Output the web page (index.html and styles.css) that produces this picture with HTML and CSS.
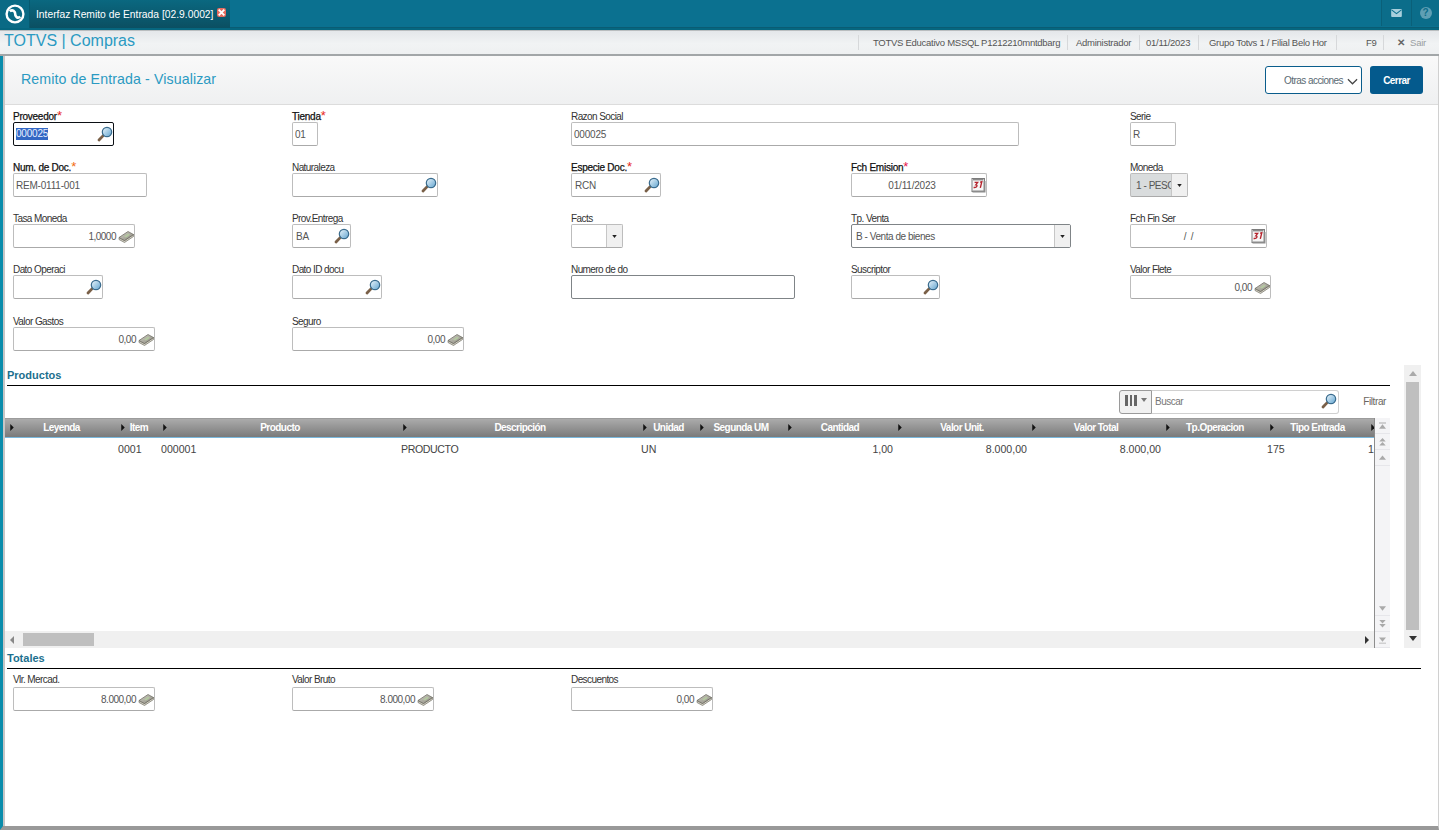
FILE: index.html
```html
<!DOCTYPE html>
<html lang="es">
<head>
<meta charset="utf-8">
<title>Remito de Entrada - Visualizar</title>
<link rel="stylesheet" href="styles.css">
</head>
<body>
<svg class="defs" width="0" height="0" aria-hidden="true">
  <defs>
    <linearGradient id="lens" x1="0" y1="0" x2="1" y2="1"><stop offset="0" stop-color="#eef7fc"/><stop offset="1" stop-color="#5fa3cf"/></linearGradient>
    <linearGradient id="cash" x1="0" y1="0" x2="1" y2="1"><stop offset="0" stop-color="#d2d0c6"/><stop offset="1" stop-color="#8a887e"/></linearGradient>
    <symbol id="i-search" viewBox="0 0 16 16">
      <path d="M2 14 L6.2 9.6" stroke="#7a6048" stroke-width="2.8" stroke-linecap="round"/>
      <circle cx="10" cy="6" r="4.7" fill="url(#lens)" stroke="#3a6c8e" stroke-width="1.2"/>
    </symbol>
    <symbol id="i-cal" viewBox="0 0 16 16">
      <rect x="2" y="1.5" width="12.5" height="13" fill="#f6f6f6" stroke="#7c7c7c"/>
      <path d="M2.5 14.5 L14.5 14.5 L14.5 4" fill="none" stroke="#8c8c8c" stroke-width="2"/>
      <rect x="3" y="2" width="10.5" height="1.4" fill="#8a8a8a"/>
      <path d="M4.6 5.4h3l-1.7 2.3c1.8 0 1.5 3.3-2.3 2.8M10.2 5.2l1.6-.4-1.5 6" fill="none" stroke="#b5252e" stroke-width="1.4"/>
    </symbol>
    <symbol id="i-money" viewBox="0 0 16 16">
      <path d="M1 9.5 L6.5 12.5 L15.5 6.5 L15.5 8.5 L6.5 14.5 L1 11.5 Z" fill="#cfccc0" stroke="#77756a" stroke-width=".7"/>
      <path d="M1 9.5 L10 3.5 L15.5 6.5 L6.5 12.5 Z" fill="url(#cash)" stroke="#66645a" stroke-width=".7"/>
      <path d="M6 8.5 L10 5.8 L12 6.8 L8 9.5 Z" fill="#b4c9a0"/>
    </symbol>
    <symbol id="i-caret" viewBox="0 0 6 4"><path d="M0 0H6L3 4Z" fill="#222"/></symbol>
    <symbol id="i-th" viewBox="0 0 4 8"><path d="M0 0L4 4L0 8Z" fill="#111"/></symbol>
  </defs>
</svg>

<header class="topbar">
  <div class="logo-tab">
    <svg class="logo" viewBox="0 0 20 20">
      <circle cx="10" cy="10" r="8.4" fill="none" stroke="#fff" stroke-width="2.4"/>
      <path d="M4.8 7.4 C7.6 4.8 10.4 7.8 10.2 10 C10 12.2 12.6 15.2 15.2 12.6" fill="none" stroke="#fff" stroke-width="2.6"/>
    </svg>
  </div>
  <div class="tab">
    <span>Interfaz Remito de Entrada [02.9.0002]</span>
    <span class="tab-close"><svg viewBox="0 0 8 8"><path d="M1.5 1.5L6.5 6.5M6.5 1.5L1.5 6.5" stroke="#fff" stroke-width="1.7"/></svg></span>
  </div>
  <div class="top-actions">
    <div class="top-btn btn-mail"><svg class="mail" viewBox="0 0 12 9"><rect width="12" height="9" rx="1" fill="#a9cfdc"/><path d="M.5 1L6 5.2L11.5 1" fill="none" stroke="#0b7190" stroke-width="1.2"/></svg></div>
    <div class="top-btn btn-help"><span class="help">?</span></div>
  </div>
</header>

<div class="subbar">
  <div class="brand">TOTVS | Compras</div>
  <div class="status">
    <span class="st st-env">TOTVS Educativo MSSQL P1212210mntdbarg</span>
    <span class="st st-user">Administrador</span>
    <span class="st st-date">01/11/2023</span>
    <span class="st st-branch">Grupo Totvs 1 / Filial Belo Hor</span>
    <span class="st st-f9">F9</span>
    <span class="st st-exit"><b>✕</b> Sair</span>
  </div>
</div>

<main class="page">
  <section class="page-head">
    <h1>Remito de Entrada - Visualizar</h1>
    <div class="head-actions">
      <button class="btn-more">Otras acciones<svg viewBox="0 0 12 7"><path d="M1 1L6 6L11 1" fill="none" stroke="#444" stroke-width="1.3"/></svg></button>
      <button class="btn-close">Cerrar</button>
    </div>
  </section>

  <section class="form">
    <div class="field"><label class="req">Proveedor<i>*</i></label><div class="box w101 focus"><span class="sel">000025</span><svg class="ic"><use href="#i-search"/></svg></div></div>
    <div class="field"><label class="req">Tienda<i>*</i></label><div class="box w26"><span>01</span></div></div>
    <div class="field"><label>Razon Social</label><div class="box w448"><span>000025</span></div></div>
    <div class="field"></div>
    <div class="field"><label>Serie</label><div class="box w46"><span>R</span></div></div>

    <div class="field"><label class="req">Num. de Doc.<i class="or">*</i></label><div class="box w134"><span>REM-0111-001</span></div></div>
    <div class="field"><label>Naturaleza</label><div class="box w146"><span></span><svg class="ic"><use href="#i-search"/></svg></div></div>
    <div class="field"><label class="req">Especie Doc.<i>*</i></label><div class="box w90"><span class="in">RCN</span><svg class="ic"><use href="#i-search"/></svg></div></div>
    <div class="field"><label class="req">Fch Emision<i class="pk">*</i></label><div class="box w136"><span class="ctr">01/11/2023</span><svg class="ic"><use href="#i-cal"/></svg></div></div>
    <div class="field"><label>Moneda</label><div class="box combo w58 off"><span>1 - PESC</span><em><svg><use href="#i-caret"/></svg></em></div></div>

    <div class="field"><label>Tasa Moneda</label><div class="box w122"><span class="num">1,0000</span><svg class="ic"><use href="#i-money"/></svg></div></div>
    <div class="field"><label>Prov.Entrega</label><div class="box w59"><span class="in">BA</span><svg class="ic"><use href="#i-search"/></svg></div></div>
    <div class="field"><label>Facts</label><div class="box combo w52"><span></span><em><svg><use href="#i-caret"/></svg></em></div></div>
    <div class="field"><label>Tp. Venta</label><div class="box combo w220 dark"><span class="in">B - Venta de bienes</span><em><svg><use href="#i-caret"/></svg></em></div></div>
    <div class="field"><label>Fch Fin Ser</label><div class="box w137"><span class="ctr blank">/ /</span><svg class="ic"><use href="#i-cal"/></svg></div></div>

    <div class="field"><label>Dato Operaci</label><div class="box w90"><span></span><svg class="ic"><use href="#i-search"/></svg></div></div>
    <div class="field"><label>Dato ID docu</label><div class="box w90"><span></span><svg class="ic"><use href="#i-search"/></svg></div></div>
    <div class="field"><label>Numero de do</label><div class="box w224 dark"><span></span></div></div>
    <div class="field"><label>Suscriptor</label><div class="box w89"><span></span><svg class="ic"><use href="#i-search"/></svg></div></div>
    <div class="field"><label>Valor Flete</label><div class="box w141"><span class="num">0,00</span><svg class="ic"><use href="#i-money"/></svg></div></div>

    <div class="field lower"><label>Valor Gastos</label><div class="box w142"><span class="num">0,00</span><svg class="ic"><use href="#i-money"/></svg></div></div>
    <div class="field lower"><label>Seguro</label><div class="box w172"><span class="num">0,00</span><svg class="ic"><use href="#i-money"/></svg></div></div>
  </section>

  <div class="work">
    <div class="work-main">
      <h2 class="sect sect-prod">Productos</h2>
      <div class="grid-tools">
        <div class="searchbar">
          <div class="cols"><span class="bars"><b></b><b></b><b></b></span><svg viewBox="0 0 6 4"><path d="M0 0H6L3 4Z" fill="#777"/></svg></div>
          <div class="search-in"><span>Buscar</span><svg class="ic"><use href="#i-search"/></svg></div>
        </div>
        <a class="filter">Filtrar</a>
      </div>

      <div class="browse">
        <div class="browse-main">
          <div class="tbl">
            <div class="row thead">
              <div class="c c1"><svg><use href="#i-th"/></svg><span>Leyenda</span></div>
              <div class="c c2"><svg><use href="#i-th"/></svg><span>Item</span></div>
              <div class="c c3"><svg><use href="#i-th"/></svg><span>Producto</span></div>
              <div class="c c4"><svg><use href="#i-th"/></svg><span>Descripción</span></div>
              <div class="c c5"><svg><use href="#i-th"/></svg><span>Unidad</span></div>
              <div class="c c6"><svg><use href="#i-th"/></svg><span>Segunda UM</span></div>
              <div class="c c7"><svg><use href="#i-th"/></svg><span>Cantidad</span></div>
              <div class="c c8"><svg><use href="#i-th"/></svg><span>Valor Unit.</span></div>
              <div class="c c9"><svg><use href="#i-th"/></svg><span>Valor Total</span></div>
              <div class="c c10"><svg><use href="#i-th"/></svg><span>Tp.Operacion</span></div>
              <div class="c c11"><svg><use href="#i-th"/></svg><span>Tipo Entrada</span></div>
              <div class="c c12"><svg><use href="#i-th"/></svg></div>
            </div>
            <div class="row tbody">
              <div class="d c1"></div>
              <div class="d c2">0001</div>
              <div class="d c3">000001</div>
              <div class="d c4">PRODUCTO</div>
              <div class="d c5">UN</div>
              <div class="d c6"></div>
              <div class="d c7 r">1,00</div>
              <div class="d c8 r">8.000,00</div>
              <div class="d c9 r">8.000,00</div>
              <div class="d c10"></div>
              <div class="d c11">175</div>
              <div class="d c12">1</div>
            </div>
          </div>
          <div class="hscroll">
            <svg class="ha" viewBox="0 0 4 8"><path d="M4 0L0 4L4 8Z" fill="#888"/></svg>
            <div class="hthumb"></div>
            <svg class="ha" viewBox="0 0 4 8"><path d="M0 0L4 4L0 8Z" fill="#333"/></svg>
          </div>
        </div>
        <div class="nav">
          <div class="nav-group">
            <span class="nb"><svg viewBox="0 0 8 8"><path d="M0 0H8V1H0ZM4 2L8 7H0Z" fill="#aaa"/></svg></span>
            <span class="nb"><svg viewBox="0 0 8 10"><path d="M4 0L8 4.5H0ZM4 5L8 9.5H0Z" fill="#aaa"/></svg></span>
            <span class="nb"><svg viewBox="0 0 8 8"><path d="M4 1L8 6H0Z" fill="#aaa"/></svg></span>
          </div>
          <div class="nav-group">
            <span class="nb"><svg viewBox="0 0 8 8"><path d="M0 2H8L4 7Z" fill="#aaa"/></svg></span>
            <span class="nb"><svg viewBox="0 0 8 10"><path d="M0 0H8L4 4.5ZM0 5H8L4 9.5Z" fill="#aaa"/></svg></span>
            <span class="nb"><svg viewBox="0 0 8 8"><path d="M0 1H8L4 6ZM0 7H8V8H0Z" fill="#aaa"/></svg></span>
          </div>
        </div>
      </div>
    </div>

    <div class="vscroll">
      <svg class="va" viewBox="0 0 8 5"><path d="M4 0L8 5H0Z" fill="#aaa"/></svg>
      <div class="vthumb"></div>
      <svg class="va va-down" viewBox="0 0 8 5"><path d="M0 0H8L4 5Z" fill="#333"/></svg>
    </div>
  </div>

  <h2 class="sect sect-tot">Totales</h2>

  <section class="form totals">
    <div class="field"><label>Vlr. Mercad.</label><div class="box w142"><span class="num">8.000,00</span><svg class="ic"><use href="#i-money"/></svg></div></div>
    <div class="field"><label>Valor Bruto</label><div class="box w142"><span class="num">8.000,00</span><svg class="ic"><use href="#i-money"/></svg></div></div>
    <div class="field"><label>Descuentos</label><div class="box w142"><span class="num">0,00</span><svg class="ic"><use href="#i-money"/></svg></div></div>
  </section>
</main>
</body>
</html>
```

FILE: styles.css
```css
* { box-sizing: border-box; }
html, body { margin: 0; height: 830px; overflow: hidden; }
body {
  width: 1439px;
  background: #fff;
  font-family: "Liberation Sans", Arial, sans-serif;
  font-size: 10px;
  color: #333;
  display: flex;
  flex-direction: column;
}
.defs { position: absolute; }

/* Top bar */
.topbar {
  height: 30px;
  flex: none;
  display: flex;
  background: #0b7190;
  border-bottom: 2px solid #06667f;
  box-shadow: inset 0 -1px 0 #0a5c73;
}
.logo-tab {
  width: 30px;
  height: 28px;
  display: flex;
  align-items: center;
  justify-content: center;
  background: #0a6a85;
  border-right: 1px solid #075a70;
}
.logo { width: 20px; height: 20px; }
.tab {
  width: 200px;
  height: 28px;
  display: flex;
  align-items: center;
  gap: 4px;
  padding: 0 0 0 6px;
  background: linear-gradient(#0a6880, #0b4f62);
  color: #fff;
  font-size: 10.3px;
  white-space: nowrap;
}
.tab-close {
  width: 9px;
  height: 9px;
  display: flex;
  background: #e56a5d;
  border-radius: 2px;
  margin-top: -3px;
}
.tab-close svg { width: 9px; height: 9px; }
.top-actions { margin-left: auto; display: flex; }
.top-btn {
  height: 26px;
  display: flex;
  align-items: center;
  justify-content: center;
  border-left: 1px solid #0a6079;
  background: #0b6d8a;
}
.btn-mail { width: 30px; }
.btn-help { width: 28px; }
.mail { width: 11px; height: 8px; }
.help {
  width: 12px;
  height: 12px;
  border-radius: 50%;
  background: #5f9fb4;
  color: #0b6d8a;
  font-weight: bold;
  font-size: 10px;
  line-height: 12px;
  text-align: center;
}

/* Module bar */
.subbar {
  height: 26px;
  flex: none;
  display: flex;
  align-items: center;
  justify-content: space-between;
  background: linear-gradient(#e4e7ea, #f1f3f4 55%, #eef0f1);
  border-top: 1px solid #b9bdbf;
  border-bottom: 2px solid #a2a6a8;
  padding-left: 4px;
}
.brand { font-size: 16px; color: #2b9ac2; white-space: nowrap; margin-top: -4px; }
.status { display: flex; align-items: center; height: 15px; margin-top: -1px; color: #555; font-size: 9.5px; letter-spacing: -.27px; white-space: nowrap; }
.st { border-left: 1px solid #d6d8da; height: 15px; line-height: 15px; display: block; }
.st-env { width: 209px; padding-left: 14px; }
.st-user { width: 72px; padding-left: 8px; }
.st-date { width: 59px; padding-left: 6px; }
.st-branch { width: 138px; padding-left: 10px; }
.st-f9 { width: 47px; padding-left: 29px; }
.st-exit { width: 56px; padding-left: 13px; color: #9a9ea1; }
.st-exit b { color: #666; margin-right: 3px; }

/* Page */
.page {
  flex: 1;
  min-height: 0;
  display: flex;
  flex-direction: column;
  border-left: 3px solid #0a8cab;
  border-right: 1px solid #d0d0d0;
  border-bottom: 4px solid #999;
  box-shadow: inset 2px 0 0 #c6c6c6;
  padding-left: 2px;
}
.page-head {
  height: 49px;
  flex: none;
  display: flex;
  align-items: center;
  justify-content: space-between;
  background: linear-gradient(#f9f9f9, #eff0f1);
  border-bottom: 1px solid #dcdcdc;
  padding: 0 15px 0 16px;
}
h1 { margin: -2px 0 0; font-size: 14.2px; font-weight: normal; color: #2b9ac2; letter-spacing: .1px; }
.head-actions { display: flex; gap: 8px; }
.btn-more {
  width: 97px;
  height: 28px;
  display: flex;
  align-items: center;
  justify-content: flex-end;
  gap: 4px;
  padding: 0 3px 0 0;
  background: #fff;
  border: 1px solid #0a5d8c;
  border-radius: 3px;
  font: 10px "Liberation Sans", Arial, sans-serif;
  letter-spacing: -.55px;
  color: #5a6a72;
}
.btn-more svg { width: 11px; height: 7px; margin-top: 3px; }
.btn-close {
  width: 53px;
  height: 28px;
  background: #045a8d;
  border: 0;
  border-radius: 3px;
  font: bold 10px "Liberation Sans", Arial, sans-serif;
  letter-spacing: -.55px;
  color: #fff;
}

/* Form */
.form {
  flex: none;
  display: grid;
  grid-template-columns: 279px 279px 280px 279px 1fr;
  grid-auto-rows: 51px;
  padding: 5px 0 0 8px;
}
.field { display: flex; flex-direction: column; align-items: flex-start; }
.field.lower { margin-top: 1px; }
label { height: 12px; padding-top: 1px; line-height: 11px; color: #333; font-size: 10px; letter-spacing: -.58px; white-space: nowrap; }
label.req { color: #111; letter-spacing: -.25px; line-height: 12px; -webkit-text-stroke: .25px #111; }
label i { font-style: normal; color: #e8291c; font-size: 13px; line-height: 10px; -webkit-text-stroke: 0; }
label i.or { color: #f26a10; }
label i.pk { color: #e8174e; }
.box {
  height: 24px;
  display: flex;
  align-items: center;
  border: 1px solid #bdbdbd;
  border-bottom-color: #aaa;
  border-radius: 2px;
  background: #fff;
  padding: 0 0 0 2px;
  color: #555;
  font-size: 10px;
  letter-spacing: -.2px;
}
.box > span { flex: 1; min-width: 0; white-space: nowrap; overflow: hidden; }
.box .in { padding-left: 1px; }
.box .ctr { text-align: center; }
.box .blank { padding-right: 6px; word-spacing: 2px; }
.box .num { text-align: right; padding-right: 2px; letter-spacing: -.5px; }
.box .ic { flex: none; width: 16px; height: 16px; }
.box .sel { flex: none; background: #3367c4; color: #e8f0ff; line-height: 12px; margin-right: auto; }
.box.focus { border: 1px solid #0b0f14; }
.box.dark { border-color: #7f8487; }
.box.combo { letter-spacing: -.45px; }
.box.combo .in { padding-left: 2px; }
.box.combo em {
  flex: none;
  width: 16px;
  height: 22px;
  display: flex;
  align-items: center;
  justify-content: center;
  background: #f0f0f0;
  border-left: 1px solid #c6c6c6;
}
.box.combo em svg { width: 5px; height: 3px; }
.box.off { background: #d9dcdd; }
.box.off > span { padding-left: 3px; }
.w26 { width: 26px; }
.w46 { width: 46px; }
.w52 { width: 52px; }
.w58 { width: 58px; }
.w59 { width: 59px; }
.w89 { width: 89px; }
.w90 { width: 90px; }
.w101 { width: 101px; }
.w122 { width: 122px; }
.w134 { width: 134px; }
.w136 { width: 136px; }
.w137 { width: 137px; }
.w141 { width: 141px; }
.w142 { width: 142px; }
.w146 { width: 146px; }
.w172 { width: 172px; }
.w220 { width: 220px; }
.w224 { width: 224px; }
.w448 { width: 448px; }

/* Work area */
.work { flex: none; display: flex; align-items: stretch; }
.work-main { width: 1385px; flex: none; }
.sect {
  margin: 0 0 0 2px;
  font-size: 11px;
  font-weight: bold;
  color: #1c6f8e;
  border-bottom: 1px solid #000;
}
.sect-prod { height: 21px; line-height: 20px; }
.sect-tot { height: 21px; line-height: 20px; width: 1414px; flex: none; }
.grid-tools {
  height: 32px;
  display: flex;
  align-items: center;
  justify-content: flex-end;
  padding-right: 4px;
}
.searchbar { display: flex; height: 24px; width: 220px; }
.cols {
  width: 33px;
  display: flex;
  align-items: center;
  gap: 4px;
  padding-left: 5px;
  background: #f1f1f1;
  border: 1px solid #9a9a9a;
  border-radius: 3px 0 0 3px;
}
.bars { display: flex; gap: 2px; }
.bars b { width: 2.5px; height: 11px; background: #666; margin-top: -3px; }
.cols svg { width: 6px; height: 4px; margin-top: -5px; }
.search-in {
  flex: 1;
  display: flex;
  align-items: center;
  justify-content: space-between;
  padding: 0 1px 2px 3px;
  border: 1px solid #d0d0d0;
  border-left: 0;
  border-radius: 0 3px 3px 0;
  color: #777;
  font-size: 10px;
  letter-spacing: -.5px;
}
.search-in .ic { width: 16px; height: 16px; }
.filter { margin-left: 23px; margin-top: -2px; color: #6a6560; font-size: 10px; letter-spacing: -.4px; width: 24px; text-align: right; }

.browse { display: flex; height: 230px; }
.browse-main { width: 1369px; display: flex; flex-direction: column; overflow: hidden; }
.tbl { flex: 1; overflow: hidden; }
.row {
  display: grid;
  grid-template-columns: 111px 42px 240px 240px 57px 88px 110px 134px 134px 104px 101px 8px;
}
.thead {
  height: 20px;
  background: linear-gradient(#ababab, #7a7a7a);
  border-top: 1px solid #9c9c9c;
  border-bottom: 1px solid #7ab8dc;
  color: #fff;
  font-weight: bold;
  font-size: 10px;
  letter-spacing: -.55px;
}
.c { display: flex; align-items: center; position: relative; justify-content: center; overflow: hidden; white-space: nowrap; padding: 0 0 1px 4px; }
.c1 { padding-left: 2px; }
.c svg { position: absolute; left: 5px; top: 5px; width: 4px; height: 7px; }
.tbody { height: 22px; color: #444; font-size: 10.6px; line-height: 22px; }
.d { padding-left: 3px; white-space: nowrap; }
.d.c2, .d.c11, .d.c12 { padding-left: 2px; }
.d.c4 { letter-spacing: -.4px; }
.d.r { text-align: right; padding: 0; }
.hscroll {
  height: 17px;
  flex: none;
  display: flex;
  align-items: center;
  background: #f0f0f0;
  padding: 0 5px;
}
.ha { width: 4px; height: 8px; flex: none; }
.hthumb { width: 71px; height: 13px; background: #bfbfbf; margin-left: 9px; margin-right: auto; }
.nav {
  width: 16px;
  display: flex;
  flex-direction: column;
  justify-content: space-between;
  border-left: 1px solid #8d8d8d;
  background: #f4f4f6;
}
.nav-group { display: flex; flex-direction: column; }
.nb { height: 16px; display: flex; align-items: center; justify-content: center; border-bottom: 1px solid #e6e6ea; }
.nb svg { width: 7px; height: 8px; }

.vscroll {
  width: 17px;
  margin-left: 14px;
  display: flex;
  flex-direction: column;
  align-items: center;
  background: #f0f0f0;
}
.va { width: 8px; height: 5px; margin: 6px 0; flex: none; }
.va-down { margin-bottom: 7px; }
.vthumb { width: 13px; flex: 1; background: #bfbfbf; }

.totals { padding-top: 4px; }
.totals label { margin-bottom: 2px; }
```
